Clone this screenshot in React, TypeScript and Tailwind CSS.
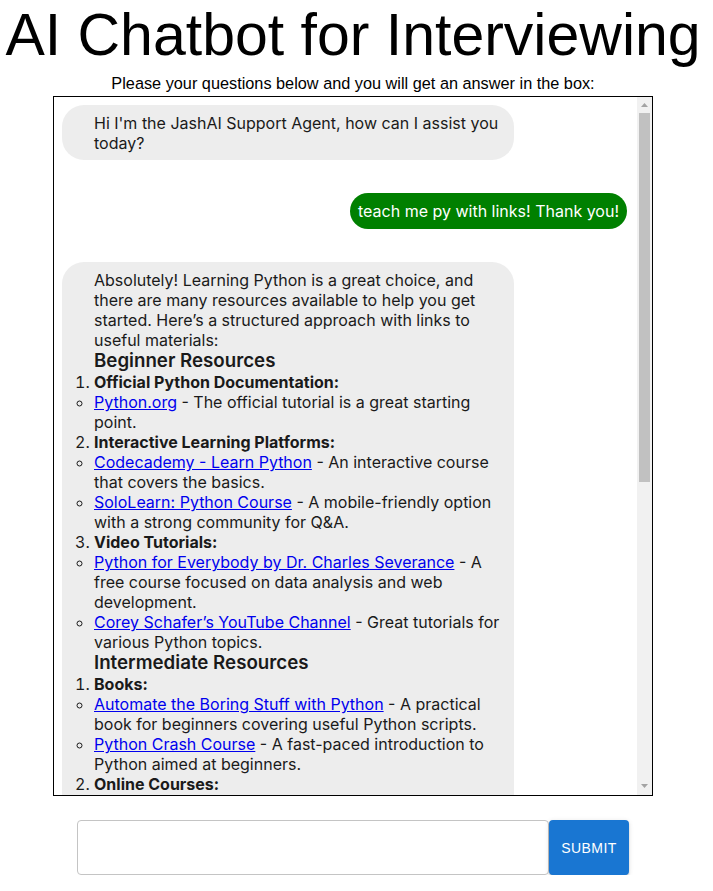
import { FC, useState } from 'react';

type Item = { href: string; label: string; rest: string };
type Group = { title: string; items: Item[] };
type Section = { heading: string; groups: Group[] };

const sections: Section[] = [
  {
    heading: 'Beginner Resources',
    groups: [
      {
        title: 'Official Python Documentation:',
        items: [{ href: '#', label: 'Python.org', rest: ' - The official tutorial is a great starting point.' }],
      },
      {
        title: 'Interactive Learning Platforms:',
        items: [
          { href: '#', label: 'Codecademy - Learn Python', rest: ' - An interactive course that covers the basics.' },
          { href: '#', label: 'SoloLearn: Python Course', rest: ' - A mobile-friendly option with a strong community for Q&A.' },
        ],
      },
      {
        title: 'Video Tutorials:',
        items: [
          { href: '#', label: 'Python for Everybody by Dr. Charles Severance', rest: ' - A free course focused on data analysis and web development.' },
          { href: '#', label: 'Corey Schafer’s YouTube Channel', rest: ' - Great tutorials for various Python topics.' },
        ],
      },
    ],
  },
  {
    heading: 'Intermediate Resources',
    groups: [
      {
        title: 'Books:',
        items: [
          { href: '#', label: 'Automate the Boring Stuff with Python', rest: ' - A practical book for beginners covering useful Python scripts.' },
          { href: '#', label: 'Python Crash Course', rest: ' - A fast-paced introduction to Python aimed at beginners.' },
        ],
      },
      {
        title: 'Online Courses:',
        items: [
          { href: '#', label: 'Coursera - Python for Everybody', rest: ' - A series of courses that cover Python fundamentals.' },
          { href: '#', label: 'edX - Introduction to Python', rest: ' - A hands-on course for absolute beginners.' },
        ],
      },
    ],
  },
  {
    heading: 'Advanced Resources',
    groups: [
      {
        title: 'Books:',
        items: [
          { href: '#', label: 'Fluent Python', rest: ' - Dive deeper into Python’s features and best practices.' },
          { href: '#', label: 'Effective Python', rest: ' - 90 specific ways to write better Python code.' },
        ],
      },
      {
        title: 'Practice Platforms:',
        items: [
          { href: '#', label: 'LeetCode', rest: ' - Practice coding problems and prepare for interviews.' },
          { href: '#', label: 'HackerRank', rest: ' - Solve challenges to sharpen your Python skills.' },
        ],
      },
    ],
  },
];

const BotBubble: FC<{ children: React.ReactNode }> = ({ children }) => (
  <div className="self-start w-[452px] bg-[#ededed] rounded-[22px] pl-8 pr-3 pt-2 pb-[7px] text-base leading-5 text-[#1a1a1a]">
    {children}
  </div>
);

// classic scrollbar look, drawn since the headless view hides native ones
const ScrollRail: FC = () => (
  <div className="w-[15px] shrink-0 bg-[#f1f1f1] flex flex-col">
    <div className="h-4 flex items-center justify-center">
      <svg width="7" height="4" viewBox="0 0 7 4">
        <path d="M0 4L3.5 0L7 4Z" fill="#a3a3a3" />
      </svg>
    </div>
    <div className="flex-1">
      <div className="mx-[2px] h-[369px] bg-[#c1c1c1]" />
    </div>
    <div className="h-4 flex items-center justify-center pb-[3px]">
      <svg width="7" height="4" viewBox="0 0 7 4">
        <path d="M0 0L3.5 4L7 0Z" fill="#a3a3a3" />
      </svg>
    </div>
  </div>
);

export default function App() {
  const [question, setQuestion] = useState('');

  return (
    <div className="w-[706px] flex flex-col items-center bg-white text-black font-['Liberation_Sans',Arial,sans-serif]">
      <h1 className="text-[59px] leading-[70px] whitespace-nowrap">AI Chatbot for Interviewing</h1>
      <p className="mt-[4px] text-[16.3px] leading-[18px]">
        Please your questions below and you will get an answer in the box:
      </p>

      {/* chat window */}
      <div className="mt-1 w-[600px] h-[700px] border border-black flex font-['Inter',sans-serif]">
        <div className="flex-1 overflow-y-auto [scrollbar-width:none] pt-2 pl-2 pr-[10px] pb-2 flex flex-col gap-[33px]">
          <BotBubble>
            <p>Hi I'm the JashAI Support Agent, how can I assist you today?</p>
          </BotBubble>

          <div className="self-end bg-[#008000] text-white rounded-full px-2 py-2 text-base leading-5">
            teach me py with links! Thank you!
          </div>

          <BotBubble>
            <p>
              Absolutely! Learning Python is a great choice, and there are many resources available to help you get
              started. Here’s a structured approach with links to useful materials:
            </p>
            {sections.map((section) => (
              <div key={section.heading}>
                <h3 className="text-[18.72px] leading-[22px] font-semibold">{section.heading}</h3>
                <ol className="list-decimal list-outside">
                  {section.groups.map((group) => (
                    <li key={group.title}>
                      <strong className="font-bold">{group.title}</strong>
                      <ul className="list-[circle] list-outside">
                        {group.items.map((item) => (
                          <li key={item.label}>
                            <a href={item.href} className="text-[#0000ee] underline">
                              {item.label}
                            </a>
                            {item.rest}
                          </li>
                        ))}
                      </ul>
                    </li>
                  ))}
                </ol>
              </div>
            ))}
            <p>
              Start with the beginner resources, practice regularly, and gradually move on to more advanced topics.
              Happy coding!
            </p>
          </BotBubble>
        </div>
        <ScrollRail />
      </div>

      {/* ask form */}
      <form className="mt-6 flex" onSubmit={(e) => e.preventDefault()}>
        <input
          type="text"
          value={question}
          onChange={(e) => setQuestion(e.target.value)}
          className="w-[472px] h-[55px] px-3 border border-[#c4c4c4] rounded-[4px] bg-white text-base focus:outline-none"
        />
        <button
          type="submit"
          className="w-[80px] h-[55px] bg-[#1976d2] text-white text-sm tracking-[0.4px] rounded-[4px] shadow-[0_3px_1px_-2px_rgba(0,0,0,0.2),0_2px_2px_0_rgba(0,0,0,0.14),0_1px_5px_0_rgba(0,0,0,0.12)]"
        >
          SUBMIT
        </button>
      </form>
    </div>
  );
}
